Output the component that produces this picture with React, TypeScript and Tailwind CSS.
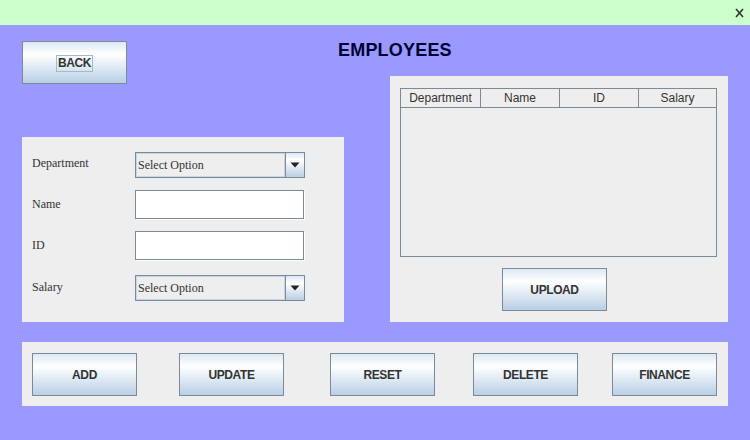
import React from "react";

const btn =
  "w-[105px] h-[43px] border border-[#7a8a99] bg-[linear-gradient(180deg,#dde8f3_0%,#ffffff_30%,#b8cfe5_100%)] flex items-center justify-center text-[12px] font-bold text-[#333333] tracking-[-0.4px] font-['Liberation_Sans',Arial,sans-serif]";

function Combo() {
  return (
    <div className="w-[170px] h-[26px] border border-[#7a8a99] bg-[#eeeeee] flex">
      <div className="flex-1 border border-[#c6d6e6] flex items-center pl-[1px] pb-[1px] text-[12px] text-[#333333] font-['Liberation_Serif','Times_New_Roman',serif]">
        Select Option
      </div>
      <div className="w-[19px] border-l border-[#7a8a99] bg-[linear-gradient(180deg,#dde8f3_0%,#ffffff_30%,#b8cfe5_100%)] flex items-center justify-center">
        <svg width="10" height="6" viewBox="0 0 10 6">
          <polygon points="0.5,0.5 9.5,0.5 5,5.5" fill="#222222" />
        </svg>
      </div>
    </div>
  );
}

function Field() {
  return (
    <div className="w-[169px] h-[29px] bg-white border border-[#7a8a99] shadow-[1px_1px_0_#ffffff]" />
  );
}

function Label({ children, pb }: { children: React.ReactNode; pb: string }) {
  return (
    <div
      className={`w-[103px] text-[12px] text-[#333333] font-['Liberation_Serif','Times_New_Roman',serif] ${pb}`}
    >
      {children}
    </div>
  );
}

export default function App() {
  return (
    <div className="w-[750px] h-[440px] bg-[#9999ff] overflow-hidden font-['Liberation_Sans',Arial,sans-serif]">
      <div className="h-[25px] bg-[#ccffcc] flex items-center justify-end pr-[6px]">
        <svg width="9" height="10" viewBox="0 0 9 10">
          <path d="M1 1 L8 9 M8 1 L1 9" stroke="#333333" strokeWidth="1.6" />
        </svg>
      </div>
      <div className="pl-[22px] pt-[16px]">
        <div className="grid grid-cols-[322px_46px_338px] grid-rows-[35px_61px_185px]">
          <div className="col-start-1 col-span-3 row-start-1 pl-[316px] text-[18px] leading-[18px] font-bold text-[#000033] tracking-[0.2px]">
            EMPLOYEES
          </div>
          <div className="col-start-1 row-start-1 row-span-2 self-start">
            <div className={`${btn} pt-[2px]`}>
              <span className="border border-[#a3b8cc] px-[1px] leading-[15px]">BACK</span>
            </div>
          </div>
          <div className="col-start-3 row-start-2 row-span-2 bg-[#eeeeee] pl-[10px] pt-[12px] flex flex-col">
            <div className="w-[317px] h-[169px] border border-[#7a8a99] bg-[#eeeeee] flex flex-col">
              <div className="grid grid-cols-[80px_79px_79px_77px] h-[19px] border-b border-[#7a8a99] text-[12px] text-[#333333]">
                <div className="border-r border-[#7a8a99] flex items-center justify-center">Department</div>
                <div className="border-r border-[#7a8a99] flex items-center justify-center">Name</div>
                <div className="border-r border-[#7a8a99] flex items-center justify-center">ID</div>
                <div className="flex items-center justify-center">Salary</div>
              </div>
            </div>
            <div className={`${btn} mt-[11px] ml-[102px]`}>UPLOAD</div>
          </div>
          <div className="col-start-1 row-start-3 bg-[#eeeeee] pl-[10px] pt-[15px] flex flex-col">
            <div className="flex items-center">
              <Label pb="pb-[4px]">Department</Label>
              <Combo />
            </div>
            <div className="flex items-center mt-[12px]">
              <Label pb="pb-[1px]">Name</Label>
              <Field />
            </div>
            <div className="flex items-center mt-[12px]">
              <Label pb="pb-[2px]">ID</Label>
              <Field />
            </div>
            <div className="flex items-center mt-[15px]">
              <Label pb="pb-[3px]">Salary</Label>
              <Combo />
            </div>
          </div>
        </div>
        <div className="mt-[20px] w-[706px] h-[64px] bg-[#eeeeee] flex items-start pt-[11px] pl-[10px]">
          <div className={btn}>ADD</div>
          <div className={`${btn} ml-[42px]`}>UPDATE</div>
          <div className={`${btn} ml-[46px]`}>RESET</div>
          <div className={`${btn} ml-[38px]`}>DELETE</div>
          <div className={`${btn} ml-[34px]`}>FINANCE</div>
        </div>
      </div>
    </div>
  );
}
